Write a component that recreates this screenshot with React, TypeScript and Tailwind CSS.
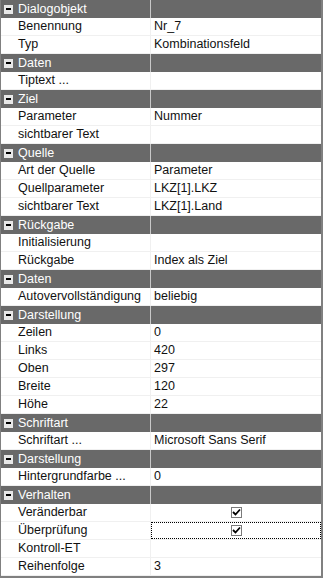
import React from "react";

type Row =
  | { kind: "group"; title: string }
  | { kind: "prop"; label: string; value?: string; check?: boolean; focus?: boolean };

const rows: Row[] = [
  { kind: "group", title: "Dialogobjekt" },
  { kind: "prop", label: "Benennung", value: "Nr_7" },
  { kind: "prop", label: "Typ", value: "Kombinationsfeld" },
  { kind: "group", title: "Daten" },
  { kind: "prop", label: "Tiptext ..." },
  { kind: "group", title: "Ziel" },
  { kind: "prop", label: "Parameter", value: "Nummer" },
  { kind: "prop", label: "sichtbarer Text" },
  { kind: "group", title: "Quelle" },
  { kind: "prop", label: "Art der Quelle", value: "Parameter" },
  { kind: "prop", label: "Quellparameter", value: "LKZ[1].LKZ" },
  { kind: "prop", label: "sichtbarer Text", value: "LKZ[1].Land" },
  { kind: "group", title: "Rückgabe" },
  { kind: "prop", label: "Initialisierung" },
  { kind: "prop", label: "Rückgabe", value: "Index als Ziel" },
  { kind: "group", title: "Daten" },
  { kind: "prop", label: "Autovervollständigung", value: "beliebig" },
  { kind: "group", title: "Darstellung" },
  { kind: "prop", label: "Zeilen", value: "0" },
  { kind: "prop", label: "Links", value: "420" },
  { kind: "prop", label: "Oben", value: "297" },
  { kind: "prop", label: "Breite", value: "120" },
  { kind: "prop", label: "Höhe", value: "22" },
  { kind: "group", title: "Schriftart" },
  { kind: "prop", label: "Schriftart ...", value: "Microsoft Sans Serif" },
  { kind: "group", title: "Darstellung" },
  { kind: "prop", label: "Hintergrundfarbe ...", value: "0" },
  { kind: "group", title: "Verhalten" },
  { kind: "prop", label: "Veränderbar", check: true },
  { kind: "prop", label: "Überprüfung", check: true, focus: true },
  { kind: "prop", label: "Kontroll-ET" },
  { kind: "prop", label: "Reihenfolge", value: "3" },
];

function CheckBox() {
  return (
    <span className="flex h-[11px] w-[11px] items-center justify-center border border-[#7a7a7a] bg-white">
      <svg width="9" height="9" viewBox="0 0 9 9">
        <path d="M1 4 L3.5 6.5 L8 1.5" fill="none" stroke="#000" strokeWidth="1.8" />
      </svg>
    </span>
  );
}

function GroupRow({ title }: { title: string }) {
  return (
    <div className="flex h-[18px] bg-[#696969] text-white">
      <div className="flex w-[149px] items-center">
        <span className="ml-[3px] mr-[5px] flex h-[9px] w-[9px] items-center justify-center bg-[#e8e8e8]">
          <span className="h-[2px] w-[5px] bg-black" />
        </span>
        <span className="leading-[18px]">{title}</span>
      </div>
      <div className="w-px bg-[#c8c8c8]" />
      <div className="flex-1" />
    </div>
  );
}

function PropRow({ label, value, check, focus }: { label: string; value?: string; check?: boolean; focus?: boolean }) {
  return (
    <div className="flex h-[18px] border-b border-[#f0f0f0] text-[#111]">
      <div className="w-[149px] overflow-hidden whitespace-nowrap pl-[17px] leading-[17px]">{label}</div>
      <div className="w-px bg-[#f0f0f0]" />
      <div
        className={
          focus
            ? "flex flex-1 items-center justify-center border border-dotted border-black"
            : check
            ? "flex flex-1 items-center justify-center"
            : "flex-1 pl-[3px] leading-[17px]"
        }
      >
        {check ? <CheckBox /> : value}
      </div>
    </div>
  );
}

export default function App() {
  return (
    <div
      className="h-[578px] w-[323px] overflow-hidden border-b-2 border-l border-r-2 border-[#808080] bg-white text-[12.5px]"
      style={{ fontFamily: '"Liberation Sans", Arial, sans-serif' }}
    >
      {rows.map((r, i) =>
        r.kind === "group" ? (
          <GroupRow key={i} title={r.title} />
        ) : (
          <PropRow key={i} label={r.label} value={r.value} check={r.check} focus={r.focus} />
        )
      )}
    </div>
  );
}
